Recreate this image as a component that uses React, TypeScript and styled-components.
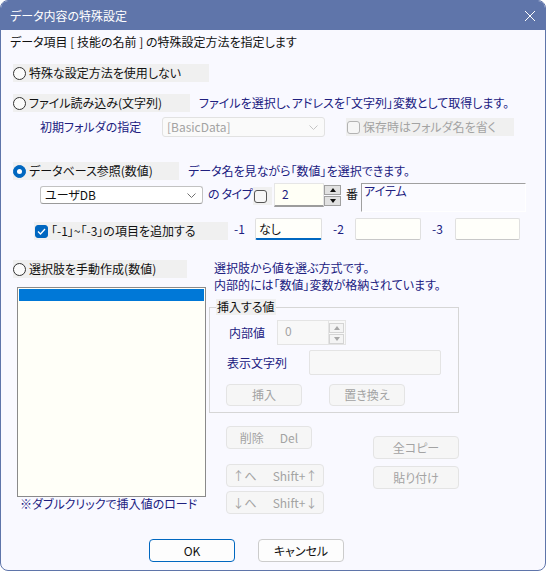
import React from "react";
import styled, { createGlobalStyle, css } from "styled-components";

const NAVY = "#20207f";

const Global = createGlobalStyle`
  html, body { margin: 0; padding: 0; background: #ffffff; }
  body {
    font-family: "Noto Sans CJK JP", "Noto Sans", sans-serif;
    font-size: 12px;
    font-feature-settings: "palt";
    color: #111;
  }
  * { box-sizing: border-box; }
`;

const Window = styled.div`
  width: 546px;
  height: 571px;
  border: 1px solid #5f75aa;
  border-radius: 8px;
  overflow: hidden;
  background: #f9f9ff;
  display: flex;
  flex-direction: column;
`;

const TitleBar = styled.div`
  height: 29px;
  flex: none;
  background: #5f75aa;
  color: #ffffff;
  display: flex;
  align-items: center;
  justify-content: space-between;
  padding: 0 9px;
  font-size: 12px;
  line-height: 16px;
`;

const Body = styled.div`
  flex: 1;
  display: flex;
  flex-direction: column;
`;

const Intro = styled.div`
  margin: 4px 0 0 9px;
  line-height: 16px;
  color: #111;
`;

const Row = styled.div<{ $mt: number; $ml?: number; $align?: string }>`
  display: flex;
  align-items: ${(p) => p.$align || "center"};
  margin-top: ${(p) => p.$mt}px;
  margin-left: ${(p) => p.$ml || 0}px;
`;

const RadioBox = styled.label<{ $w: number }>`
  display: flex;
  align-items: center;
  flex: none;
  width: ${(p) => p.$w}px;
  height: 18px;
  background: #f0f0f0;
  gap: 3px;
  color: #111;
  line-height: 16px;
  white-space: nowrap;
`;

const RadioDot = styled.span<{ $on?: boolean }>`
  width: 13px;
  height: 13px;
  flex: none;
  border-radius: 50%;
  border: 1px solid #333;
  background: #fbfbfb;
  position: relative;
  ${(p) =>
    p.$on &&
    css`
      background: #0067c0;
      border-color: #0067c0;
      &::after {
        content: "";
        position: absolute;
        left: 3px;
        top: 3px;
        width: 5px;
        height: 5px;
        border-radius: 50%;
        background: #fff;
      }
    `}
`;

const Desc = styled.div<{ $ml: number; $mt?: number; $lh?: number }>`
  color: ${NAVY};
  margin-left: ${(p) => p.$ml}px;
  margin-top: ${(p) => p.$mt || 0}px;
  line-height: ${(p) => p.$lh || 16}px;
  white-space: nowrap;
`;

const FieldLabel = styled.span<{ $w: number; $ml?: number; $lh?: number; $mt?: number; $ls?: number }>`
  flex: none;
  width: ${(p) => p.$w}px;
  margin-left: ${(p) => p.$ml || 0}px;
  margin-top: ${(p) => p.$mt || 0}px;
  line-height: ${(p) => p.$lh || 16}px;
  letter-spacing: ${(p) => p.$ls || 0}px;
  color: ${NAVY};
  white-space: nowrap;
`;

const Combo = styled.div<{ $disabled?: boolean; $h: number; $mt?: number }>`
  flex: none;
  width: 163px;
  height: ${(p) => p.$h}px;
  margin-top: ${(p) => p.$mt || 0}px;
  border: 1px solid ${(p) => (p.$disabled ? "#e2e2e2" : "#c2c2c2")};
  border-bottom-color: ${(p) => (p.$disabled ? "#e2e2e2" : "#9a9a9a")};
  border-radius: 3px;
  background: ${(p) => (p.$disabled ? "#fafafa" : "#ffffff")};
  color: ${(p) => (p.$disabled ? "#a3a3a3" : "#111")};
  display: flex;
  align-items: center;
  justify-content: space-between;
  padding: 0 6px 0 4px;
  line-height: 16px;
`;

const CheckBox = styled.label<{ $w: number; $mt?: number; $disabled?: boolean }>`
  flex: none;
  display: flex;
  align-items: center;
  gap: 3px;
  width: ${(p) => p.$w}px;
  height: 18px;
  margin-top: ${(p) => p.$mt || 0}px;
  background: #f0f0f0;
  padding-left: 1px;
  color: ${(p) => (p.$disabled ? "#a3a3a3" : "#111")};
  line-height: 16px;
  white-space: nowrap;
`;

const CheckSquare = styled.span<{ $on?: boolean; $disabled?: boolean }>`
  width: 13px;
  height: 13px;
  flex: none;
  border-radius: 3px;
  border: 1px solid ${(p) => (p.$on ? "#0067c0" : p.$disabled ? "#b3b3b3" : "#555")};
  background: ${(p) => (p.$on ? "#0067c0" : "#f6f6f6")};
  display: flex;
  align-items: center;
  justify-content: center;
`;

const NumInput = styled.div<{ $w: number; $h: number; $disabled?: boolean }>`
  flex: none;
  width: ${(p) => p.$w}px;
  height: ${(p) => p.$h}px;
  background: ${(p) => (p.$disabled ? "#f8f8f8" : "#fffff6")};
  border: 1px solid ${(p) => (p.$disabled ? "#e4e4e4" : "#e6e6e6")};
  border-bottom: ${(p) => (p.$disabled ? "1px solid #e4e4e4" : "2px solid #9c9c9c")};
  color: ${(p) => (p.$disabled ? "#a3a3a3" : NAVY)};
  padding: 2px 0 0 7px;
  line-height: 16px;
`;

const Spin = styled.div<{ $mt?: number; $disabled?: boolean }>`
  flex: none;
  width: 17px;
  margin-top: ${(p) => p.$mt || 0}px;
  display: flex;
  flex-direction: column;
  gap: 1px;
  padding: ${(p) => (p.$disabled ? "2px 1px 0 0" : "0")};
  background: ${(p) => (p.$disabled ? "#f8f8f8" : "transparent")};
  height: ${(p) => (p.$disabled ? "25px" : "auto")};
  border: ${(p) => (p.$disabled ? "1px solid #e4e4e4" : "none")};
  border-left: none;
`;

const SpinBtn = styled.div<{ $disabled?: boolean }>`
  height: 10px;
  background: ${(p) => (p.$disabled ? "#f4f4f4" : "#e1e1e1")};
  border: 1px solid ${(p) => (p.$disabled ? "#d4d4d4" : "#a0a0a0")};
  display: flex;
  align-items: center;
  justify-content: center;
`;

const Tri = styled.span<{ $down?: boolean; $disabled?: boolean }>`
  width: 0;
  height: 0;
  border-left: 3.5px solid transparent;
  border-right: 3.5px solid transparent;
  ${(p) =>
    p.$down
      ? `border-top: 4px solid ${p.$disabled ? "#a8a8a8" : "#111"};`
      : `border-bottom: 4px solid ${p.$disabled ? "#a8a8a8" : "#111"};`}
`;

const ItemBox = styled.div`
  flex: none;
  width: 165px;
  height: 29px;
  border-top: 1px solid #a0a0a0;
  border-left: 1px solid #a0a0a0;
  border-right: 1px solid #ffffff;
  border-bottom: 1px solid #ffffff;
  background: #fbfbff;
  color: ${NAVY};
  padding: 0 0 0 2px;
  line-height: 14px;
`;

const TextInput = styled.div<{ $w: number; $h: number; $focus?: boolean; $disabled?: boolean }>`
  flex: none;
  width: ${(p) => p.$w}px;
  height: ${(p) => p.$h}px;
  border: 1px solid ${(p) => (p.$disabled ? "#e4e4e4" : "#e0e0e0")};
  border-bottom: ${(p) =>
    p.$focus ? "2px solid #0067c0" : p.$disabled ? "1px solid #e4e4e4" : "1px solid #c8c8c8"};
  border-radius: 2px;
  background: ${(p) => (p.$disabled ? "#f8f8f8" : "#fffffa")};
  padding: 2px 0 0 3px;
  line-height: 16px;
  color: #111;
`;

const Lower = styled.div`
  display: flex;
  align-items: flex-start;
  margin-top: 20px;
`;

const LeftCol = styled.div`
  flex: none;
  width: 196px;
  margin-left: 12px;
  display: flex;
  flex-direction: column;
`;

const ListBox = styled.div`
  margin: 9px 0 0 4px;
  width: 189px;
  height: 210px;
  border: 1px solid #8a8a8a;
  background: #fffff8;
  padding: 1px 1px 0;
`;

const ListSel = styled.div`
  height: 12px;
  background: #0078d7;
`;

const Caption = styled.div`
  margin-left: 7px;
  line-height: 14px;
  color: ${NAVY};
  white-space: nowrap;
`;

const RightCol = styled.div`
  flex: none;
  display: flex;
  flex-direction: column;
`;

const GroupBox = styled.div`
  position: relative;
  margin-top: 14px;
  width: 250px;
  border: 1px solid #d6d6d6;
  padding: 0 0 6px;
`;

const GroupLegend = styled.span`
  position: absolute;
  top: -9px;
  left: 6px;
  background: #f0f0f0;
  padding: 0 1px;
  line-height: 16px;
  color: #111;
`;

const Btn = styled.button<{ $w: number; $mt?: number; $ml?: number; $primary?: boolean; $h?: number }>`
  flex: none;
  width: ${(p) => p.$w}px;
  height: ${(p) => p.$h || 23}px;
  margin-top: ${(p) => p.$mt || 0}px;
  margin-left: ${(p) => p.$ml || 0}px;
  font: inherit;
  font-size: 12px;
  line-height: 16px;
  border-radius: 4px;
  padding: 0;
  border: 1px solid ${(p) => (p.$primary ? "#0067c0" : "#cccccc")};
  background: #fdfdfd;
  color: #111;
  display: flex;
  align-items: center;
  justify-content: center;
  gap: 16px;
  white-space: nowrap;
  &:disabled {
    background: #f6f6f6;
    border-color: #e4e4e4;
    color: #a3a3a3;
  }
`;

const BtnStack = styled.div<{ $mt?: number; $ml?: number }>`
  display: flex;
  flex-direction: column;
  margin-top: ${(p) => p.$mt || 0}px;
  margin-left: ${(p) => p.$ml || 0}px;
`;

const BtnArea = styled.div`
  display: flex;
  align-items: flex-start;
  margin: 13px 0 0 17px;
`;

const Footer = styled.div`
  margin-top: auto;
  display: flex;
  gap: 23px;
  padding: 0 0 8px 148px;
`;

const Chevron = ({ color }: { color: string }) => (
  <svg width="9" height="5" viewBox="0 0 9 5">
    <polyline points="0.5,0.5 4.5,4.5 8.5,0.5" fill="none" stroke={color} strokeWidth="1" />
  </svg>
);

const Check = () => (
  <svg width="9" height="7" viewBox="0 0 9 7">
    <polyline points="1,3.5 3.5,6 8,1" fill="none" stroke="#fff" strokeWidth="1.3" />
  </svg>
);

const SpinButtons = ({ disabled, mt }: { disabled?: boolean; mt?: number }) => (
  <Spin $mt={mt} $disabled={disabled}>
    <SpinBtn $disabled={disabled}>
      <Tri $disabled={disabled} />
    </SpinBtn>
    <SpinBtn $disabled={disabled}>
      <Tri $down $disabled={disabled} />
    </SpinBtn>
  </Spin>
);

export default function App() {
  return (
    <>
      <Global />
      <Window>
        <TitleBar>
          <span>データ内容の特殊設定</span>
          <svg width="12" height="12" viewBox="0 0 12 12">
            <path d="M1 1 L11 11 M11 1 L1 11" stroke="#fff" strokeWidth="1" fill="none" />
          </svg>
        </TitleBar>
        <Body>
          <Intro>データ項目 [ 技能の名前 ] の特殊設定方法を指定します</Intro>

          <Row $mt={14} $ml={12}>
            <RadioBox $w={196}>
              <RadioDot />
              特殊な設定方法を使用しない
            </RadioBox>
          </Row>

          <Row $mt={12} $ml={12}>
            <RadioBox $w={177}>
              <RadioDot />
              ファイル読み込み(文字列)
            </RadioBox>
            <Desc $ml={9}>ファイルを選択し、アドレスを「文字列」変数として取得します。</Desc>
          </Row>

          <Row $mt={5} $ml={39}>
            <FieldLabel $w={122}>初期フォルダの指定</FieldLabel>
            <Combo $disabled $h={20}>
              <span>[BasicData]</span>
              <Chevron color="#c4c4c4" />
            </Combo>
            <FieldLabel $w={21} />
            <CheckBox $w={168} $disabled>
              <CheckSquare $disabled />
              保存時はフォルダ名を省く
            </CheckBox>
          </Row>

          <Row $mt={25} $ml={12}>
            <RadioBox $w={166}>
              <RadioDot $on />
              データベース参照(数値)
            </RadioBox>
            <Desc $ml={9}>データ名を見ながら「数値」を選択できます。</Desc>
          </Row>

          <Row $mt={3} $ml={39} $align="flex-start">
            <Combo $h={18} $mt={3}>
              <span>ユーザDB</span>
              <Chevron color="#707070" />
            </Combo>
            <FieldLabel $w={45} $ml={5} $lh={18} $mt={2} $ls={-0.4}>
              の タイプ
            </FieldLabel>
            <CheckBox $w={19} $mt={4}>
              <CheckSquare />
            </CheckBox>
            <FieldLabel $w={2} />
            <NumInput $w={50} $h={24}>
              2
            </NumInput>
            <SpinButtons mt={2} />
            <FieldLabel $w={15} $ml={5} $lh={20} $mt={1}>
              <span style={{ color: "#111" }}>番</span>
            </FieldLabel>
            <ItemBox>アイテム</ItemBox>
          </Row>

          <Row $mt={6} $ml={33} $align="flex-end">
            <CheckBox $w={194}>
              <CheckSquare $on>
                <Check />
              </CheckSquare>
              「-1」~「-3」の項目を追加する
            </CheckBox>
            <FieldLabel $w={21} $ml={6} $lh={22}>
              -1
            </FieldLabel>
            <TextInput $w={67} $h={22} $focus>
              なし
            </TextInput>
            <FieldLabel $w={22} $ml={11} $lh={22}>
              -2
            </FieldLabel>
            <TextInput $w={66} $h={22} />
            <FieldLabel $w={23} $ml={11} $lh={22}>
              -3
            </FieldLabel>
            <TextInput $w={65} $h={22} />
          </Row>

          <Lower>
            <LeftCol>
              <RadioBox $w={174}>
                <RadioDot />
                選択肢を手動作成(数値)
              </RadioBox>
              <ListBox>
                <ListSel />
              </ListBox>
              <Caption>※ダブルクリックで挿入値のロード</Caption>
            </LeftCol>
            <RightCol>
              <Desc $ml={5} $mt={-1} $lh={17}>
                選択肢から値を選ぶ方式です。
                <br />
                内部的には「数値」変数が格納されています。
              </Desc>
              <GroupBox>
                <GroupLegend>挿入する値</GroupLegend>
                <Row $mt={12} $ml={19}>
                  <FieldLabel $w={48}>内部値</FieldLabel>
                  <NumInput $w={52} $h={25} $disabled>
                    0
                  </NumInput>
                  <SpinButtons disabled />
                </Row>
                <Row $mt={5} $ml={17}>
                  <FieldLabel $w={82}>表示文字列</FieldLabel>
                  <TextInput $w={132} $h={25} $disabled />
                </Row>
                <Row $mt={9} $ml={16}>
                  <Btn $w={76} $h={22} disabled>
                    挿入
                  </Btn>
                  <Btn $w={76} $h={22} $ml={27} disabled>
                    置き換え
                  </Btn>
                </Row>
              </GroupBox>
              <BtnArea>
                <BtnStack>
                  <Btn $w={86} disabled>
                    <span>削除</span>
                    <span>Del</span>
                  </Btn>
                  <Btn $w={98} $mt={15} disabled>
                    <span>↑へ</span>
                    <span>Shift+↑</span>
                  </Btn>
                  <Btn $w={98} $mt={4} disabled>
                    <span>↓へ</span>
                    <span>Shift+↓</span>
                  </Btn>
                </BtnStack>
                <BtnStack $mt={10} $ml={49}>
                  <Btn $w={86} disabled>
                    全コピー
                  </Btn>
                  <Btn $w={86} $mt={7} disabled>
                    貼り付け
                  </Btn>
                </BtnStack>
              </BtnArea>
            </RightCol>
          </Lower>

          <Footer>
            <Btn $w={86} $primary>
              OK
            </Btn>
            <Btn $w={86}>キャンセル</Btn>
          </Footer>
        </Body>
      </Window>
    </>
  );
}
